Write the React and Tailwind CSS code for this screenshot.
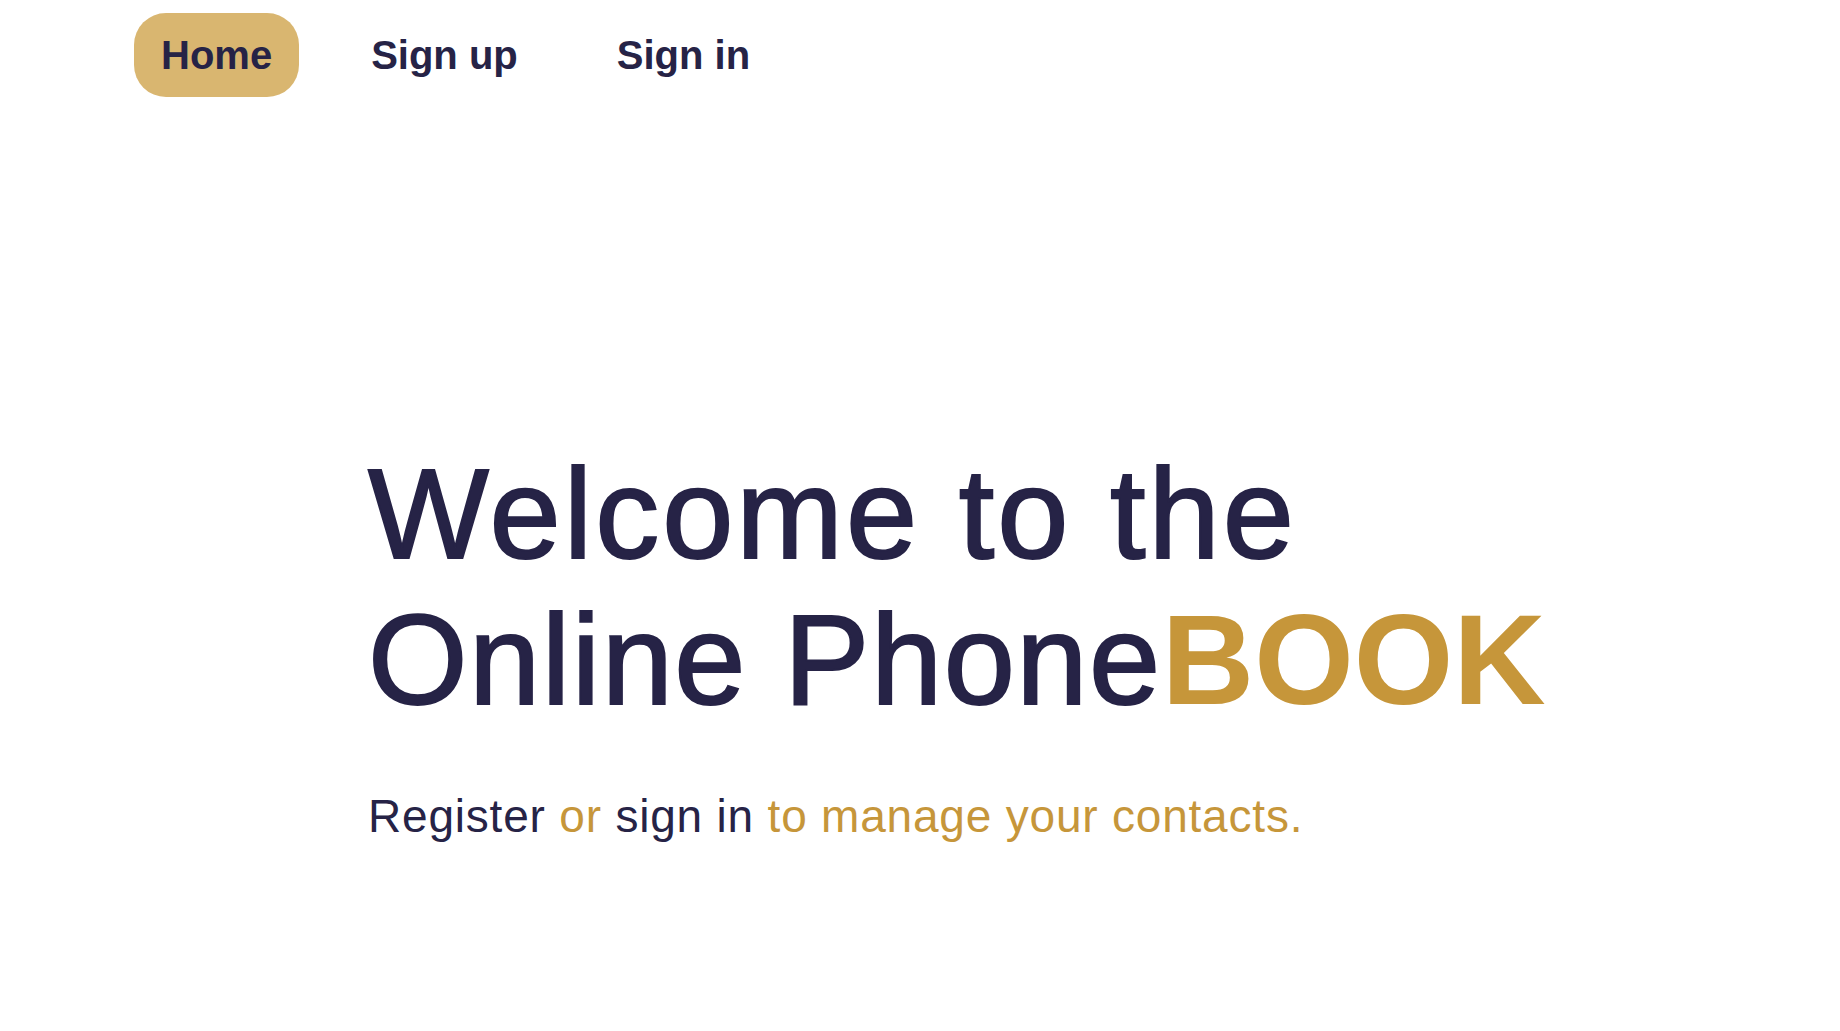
import React from 'react';

const App = () => {
  const links = [
    { id: 'home', label: 'Home', active: true },
    { id: 'signup', label: 'Sign up' },
    { id: 'signin', label: 'Sign in' },
  ];

  return (
    <div
      className="min-h-screen bg-white text-[#262346]"
      style={{ fontFamily: '"Liberation Sans", Arial, sans-serif' }}
    >
      {/* Header */}
      <header className="pt-[13px] pl-[134px]">
        <nav className="flex items-center gap-[45px]">
          {links.map((link) => (
            <a
              key={link.id}
              href="#"
              className={`px-[27px] py-[18px] rounded-[32px] text-[40px] leading-[48px] font-bold ${
                link.active ? 'bg-[#d9b670]' : ''
              }`}
            >
              {link.label}
            </a>
          ))}
        </nav>
      </header>

      {/* Hero */}
      <main className="pl-[368px] pt-[344px]">
        <h1 className="text-[128px] leading-[146px] font-normal [-webkit-text-stroke:2px_#262346]">
          <span className="tracking-[3px]">Welcome to the</span>
          <br />
          <span className="tracking-[1.5px]">Online Phone</span>
          <span className="font-bold text-[#c6963a] tracking-normal [-webkit-text-stroke:0px]">BOOK</span>
        </h1>
        <p className="mt-[55px] text-[46px] leading-[56px] tracking-[0.8px]">
          Register <span className="text-[#c6963a]">or</span> sign in{' '}
          <span className="text-[#c6963a]">to manage your contacts.</span>
        </p>
      </main>
    </div>
  );
};

export default App;
